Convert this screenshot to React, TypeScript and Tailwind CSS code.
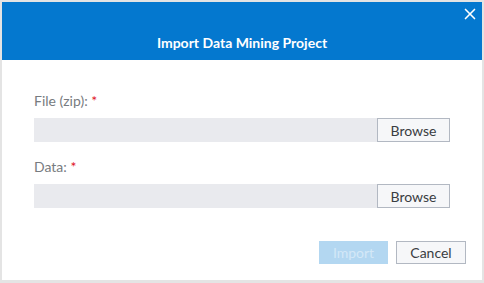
import { X } from "lucide-react";

function FileField({ label }: { label: string }) {
  return (
    <div>
      <label className="block text-[14px] leading-[18px] text-[#777b80]">
        {label} <span className="text-[#e0141e]">*</span>
      </label>
      <div className="mt-2 flex h-6">
        <div className="flex-1 bg-[#e9eaee]" />
        <button className="w-[73px] border border-[#b2b8c2] bg-[#f6f7f9] text-[14px] text-[#3a3d42]">
          Browse
        </button>
      </div>
    </div>
  );
}

export default function App() {
  return (
    <div className="h-[283px] w-[484px] bg-[#e4e4e4] pt-[2px] pl-[2px] font-['Lato',sans-serif]">
      <div className="flex h-[278px] w-[480px] flex-col bg-white">
        {/* header */}
        <div className="relative h-[58px] bg-[#0478cf] pt-8">
          <button className="absolute right-[3px] top-[3px] text-white">
            <X size={18} strokeWidth={2.2} />
          </button>
          <h1 className="text-center text-[14px] font-bold leading-[18px] text-white">
            Import Data Mining Project
          </h1>
        </div>

        {/* body */}
        <div className="flex flex-col px-8 pt-8">
          <FileField label="File (zip):" />
          <div className="mt-4">
            <FileField label="Data:" />
          </div>
        </div>

        {/* footer */}
        <div className="mt-auto flex justify-end gap-2 pr-4 pb-4">
          <button className="h-[23px] w-[69px] bg-[#b3d7f1] text-[14px] text-[#d4e8f7]" disabled>
            Import
          </button>
          <button className="h-[23px] w-[70px] border border-[#b2b8c2] bg-[#f6f7f9] text-[14px] text-[#3a3d42]">
            Cancel
          </button>
        </div>
      </div>
    </div>
  );
}
